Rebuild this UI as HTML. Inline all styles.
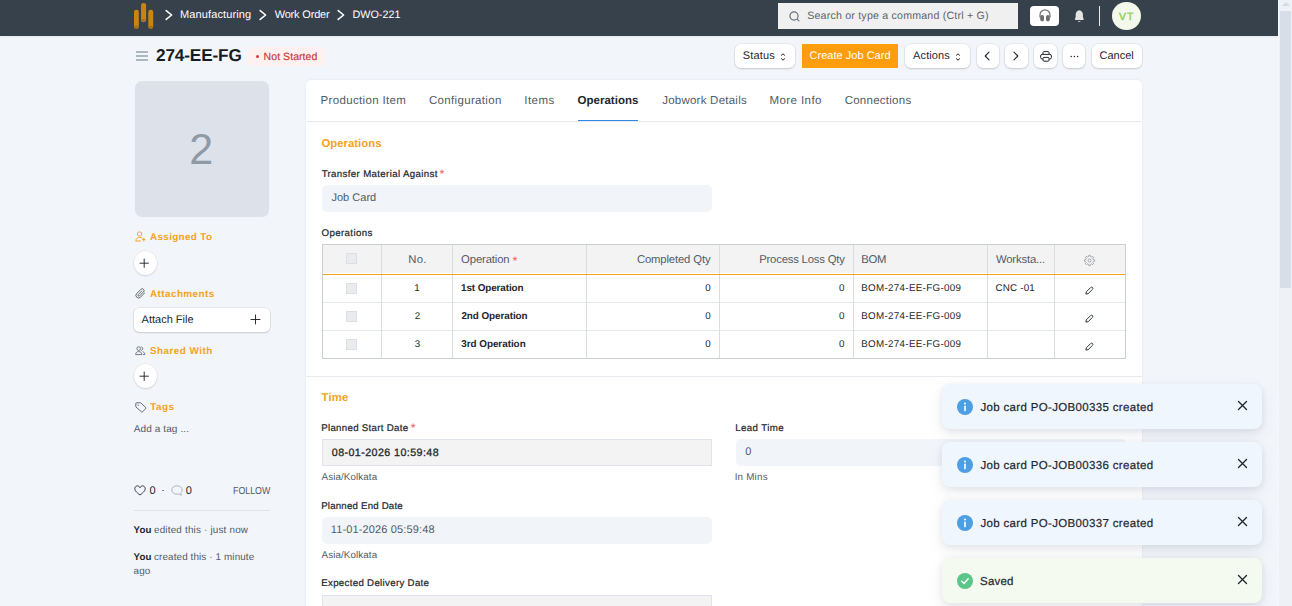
<!DOCTYPE html>
<html lang="en"><head><meta charset="utf-8"><title>274-EE-FG</title><style>
*{box-sizing:border-box;margin:0;padding:0}
html,body{width:1292px;height:606px;overflow:hidden;background:#f2f5fa;font-family:"Liberation Sans",sans-serif;}
#app{position:relative;width:1292px;height:606px;overflow:hidden}
.t{position:absolute;white-space:nowrap;display:block;text-rendering:geometricPrecision}
.abs{position:absolute}
.navbar{position:absolute;left:0;top:0;width:1278px;height:36px;background:#36414c;box-shadow:0 1px 2px rgba(30,40,60,.06)}
.btn{position:absolute;top:44px;height:24px;background:#fff;border-radius:6px;box-shadow:0 0 0 0.5px rgba(0,0,0,.08),0 1px 2px rgba(20,30,50,.16)}
.card{position:absolute;left:306px;top:80px;width:836px;height:540px;background:#fff;border-radius:5px 5px 0 0;box-shadow:0 0 2px rgba(40,60,100,.10)}
.inp{position:absolute;border-radius:5px;background:#f1f4f9}
.inp.ro{background:#f3f3f3;border:1px solid #dfe4ec;border-radius:0}
.cb{position:absolute;width:11px;height:11px;background:#e9ebee;border:1px solid #dcdfe3;border-radius:0}
.vl{position:absolute;width:1px;background:#d9dde1}
.hl{position:absolute;height:1px;background:#e4e7ea}
.circ{position:absolute;width:23.2px;height:24.6px;border-radius:50%;background:#fff;box-shadow:0 0 0 0.5px rgba(0,0,0,.07),0 1px 2px rgba(20,30,50,.12)}
.toast{position:absolute;left:941.8px;width:320.4px;height:45px;border-radius:8px;background:#eff6fd;box-shadow:0 2px 6px rgba(30,40,70,.085),0 6px 18px rgba(30,40,70,.065)}
.toast.ok{background:#f4faef}
svg{position:absolute;overflow:visible}
</style></head><body><div id="app">
<header class="navbar">
<svg style="left:133px;top:2px" width="22" height="28" viewBox="133 2 22 28"><rect x="134" y="9.8" width="4.8" height="19" rx="2.2" fill="#c8860f"/><ellipse cx="136.4" cy="27" rx="2.3" ry="1.6" fill="#ad6f10"/><rect x="141.1" y="3" width="5" height="19.3" rx="2.3" fill="#c8860f"/><ellipse cx="143.6" cy="20.5" rx="2.4" ry="1.6" fill="#ad6f10"/><rect x="148.3" y="9.8" width="4.9" height="19" rx="2.2" fill="#c8860f"/><ellipse cx="150.8" cy="27" rx="2.3" ry="1.6" fill="#ad6f10"/></svg>
<svg style="left:165.0px;top:8.7px" width="8" height="12" viewBox="0 0 8 12"><path d="M1.2 1.6 L6.6 6 L1.2 10.4" fill="none" stroke="#fff" stroke-width="1.6" stroke-linecap="round" stroke-linejoin="round"/></svg>
<span class="t" style="left:180.00px;top:7.30px;height:16px;line-height:16px;font-size:11px;font-weight:400;color:#fff;letter-spacing:0.127px;">Manufacturing</span>
<svg style="left:258.5px;top:8.7px" width="8" height="12" viewBox="0 0 8 12"><path d="M1.2 1.6 L6.6 6 L1.2 10.4" fill="none" stroke="#fff" stroke-width="1.6" stroke-linecap="round" stroke-linejoin="round"/></svg>
<span class="t" style="left:274.64px;top:7.30px;height:16px;line-height:16px;font-size:11px;font-weight:400;color:#fff;letter-spacing:-0.171px;">Work Order</span>
<svg style="left:337.0px;top:8.7px" width="8" height="12" viewBox="0 0 8 12"><path d="M1.2 1.6 L6.6 6 L1.2 10.4" fill="none" stroke="#fff" stroke-width="1.6" stroke-linecap="round" stroke-linejoin="round"/></svg>
<span class="t" style="left:352.50px;top:7.30px;height:16px;line-height:16px;font-size:10.8px;font-weight:400;color:#fff;letter-spacing:-0.017px;">DWO-221</span>
<div class="abs" style="left:778px;top:3px;width:240px;height:26px;background:#f0f0f0"></div>
<svg style="left:789px;top:10.5px" width="11" height="11" viewBox="0 0 11 11"><circle cx="5" cy="5" r="4.1" fill="none" stroke="#68727c" stroke-width="1.2"/><path d="M8.1 8.1 L9.9 9.9" stroke="#68727c" stroke-width="1.2" stroke-linecap="round"/></svg>
<span class="t" style="left:807.15px;top:8.30px;height:16px;line-height:16px;font-size:10.6px;font-weight:400;color:#5a646e;letter-spacing:0.219px;">Search or type a command (Ctrl + G)</span>
<div class="abs" style="left:1030px;top:6px;width:29px;height:20px;background:#fff;border-radius:4px"></div>
<svg style="left:1038.6px;top:9.3px" width="12" height="13" viewBox="0 0 12 13"><path d="M1 8.4 V5.8 A5 5 0 0 1 11 5.8 V8.4" fill="none" stroke="#6e6e6e" stroke-width="1.15"/><rect x="1.2" y="6" width="3.8" height="6.4" rx="1.8" fill="#6e6e6e"/><rect x="7" y="6" width="3.8" height="6.4" rx="1.8" fill="#6e6e6e"/></svg>
<svg style="left:1073.7px;top:9.8px" width="11" height="13" viewBox="0 0 11 13"><path d="M5.3 0.3 C3 0.5 1.7 2.4 1.7 4.6 V6.8 L0.9 9.2 Q0.8 9.9 1.4 9.9 H9.2 Q9.8 9.9 9.7 9.2 L8.9 6.8 V4.6 C8.9 2.4 7.6 0.5 5.3 0.3 Z" fill="#e4e4e4"/><path d="M3.9 10.9 A1.5 1.5 0 0 0 6.7 10.9 Z" fill="#e4e4e4"/></svg>
<div class="abs" style="left:1099px;top:6px;width:1px;height:20px;background:#e9e9e9"></div>
<div class="abs" style="left:1111.8px;top:1.8px;width:29.2px;height:28.6px;border-radius:50%;background:#f2f8ea"></div>
<span class="t" style="left:1119.09px;top:9.10px;height:16px;line-height:16px;font-size:10.5px;font-weight:400;color:#8ccb4e;letter-spacing:0.795px;-webkit-text-stroke:0.3px #8ccb4e;">VT</span>
</header>
<div class="page-head">
<svg style="left:136px;top:50.6px" width="12" height="10" viewBox="0 0 12 10"><path d="M0 1 H12 M0 5 H12 M0 9 H12" stroke="#98a2ab" stroke-width="1.45"/></svg>
<h3 class="t" style="left:156.07px;top:43.00px;height:24px;line-height:24px;font-size:17.2px;font-weight:700;color:#171c22;letter-spacing:-0.153px;">274-EE-FG</h3>
<div class="abs" style="left:248px;top:47px;width:77px;height:19px;border-radius:6px;background:#fff1f0"></div>
<div class="abs" style="left:255.8px;top:55.2px;width:3px;height:3px;border-radius:50%;background:#d33a3a"></div>
<span class="t" style="left:263.60px;top:49.00px;height:16px;line-height:16px;font-size:10.5px;font-weight:400;color:#c9363a;letter-spacing:0.064px;-webkit-text-stroke:0.15px #c9363a;">Not Started</span>
<div class="btn" style="left:735px;width:60px"></div>
<span class="t" style="left:742.76px;top:48.20px;height:16px;line-height:16px;font-size:11px;font-weight:400;color:#1f272e;letter-spacing:0.176px;">Status</span>
<svg style="left:779.6px;top:51.8px" width="6" height="10" viewBox="0 0 6 10"><path d="M1.4 3.3 L3 1.8 L4.6 3.3 M1.4 6.7 L3 8.2 L4.6 6.7" fill="none" stroke="#1f272e" stroke-width="1" stroke-linecap="round" stroke-linejoin="round"/></svg>
<div class="abs" style="left:802px;top:44px;width:96px;height:24px;background:#ff9d0c"></div>
<span class="t" style="left:809.47px;top:48.20px;height:16px;line-height:16px;font-size:11px;font-weight:400;color:#fff;letter-spacing:0.029px;">Create Job Card</span>
<div class="btn" style="left:905px;width:65px"></div>
<span class="t" style="left:913.12px;top:48.20px;height:16px;line-height:16px;font-size:11px;font-weight:400;color:#1f272e;letter-spacing:0.098px;">Actions</span>
<svg style="left:954.9px;top:51.8px" width="6" height="10" viewBox="0 0 6 10"><path d="M1.4 3.3 L3 1.8 L4.6 3.3 M1.4 6.7 L3 8.2 L4.6 6.7" fill="none" stroke="#1f272e" stroke-width="1" stroke-linecap="round" stroke-linejoin="round"/></svg>
<div class="btn" style="left:977px;width:22px"></div>
<svg style="left:983.9px;top:51px" width="6" height="10" viewBox="0 0 6 10"><path d="M5 1.1 L1.2 5 L5 8.9" fill="none" stroke="#1f272e" stroke-width="1.1" stroke-linecap="round" stroke-linejoin="round"/></svg>
<div class="btn" style="left:1005px;width:23px"></div>
<svg style="left:1013.3px;top:51px" width="6" height="10" viewBox="0 0 6 10"><path d="M1 1.1 L4.8 5 L1 8.9" fill="none" stroke="#1f272e" stroke-width="1.1" stroke-linecap="round" stroke-linejoin="round"/></svg>
<div class="btn" style="left:1034px;width:23px"></div>
<svg style="left:1039.5px;top:50.5px" width="12" height="11" viewBox="0 0 12 11"><path d="M3 3.4 V1.6 Q3 0.6 4 0.6 H8 Q9 0.6 9 1.6 V3.4" fill="none" stroke="#1f272e" stroke-width="1"/><rect x="0.6" y="3.4" width="10.8" height="4.6" rx="1.6" fill="none" stroke="#1f272e" stroke-width="1"/><rect x="3" y="6.4" width="6" height="3.8" rx="1" fill="#fff" stroke="#1f272e" stroke-width="1"/></svg>
<div class="btn" style="left:1063px;width:22px"></div>
<svg style="left:1070px;top:55px" width="9" height="3" viewBox="0 0 9 3"><circle cx="1.2" cy="1.5" r=".75" fill="#1f272e"/><circle cx="4.4" cy="1.5" r=".75" fill="#1f272e"/><circle cx="7.6" cy="1.5" r=".75" fill="#1f272e"/></svg>
<div class="btn" style="left:1092px;width:50px"></div>
<span class="t" style="left:1099.47px;top:48.20px;height:16px;line-height:16px;font-size:11px;font-weight:400;color:#1f272e;letter-spacing:-0.002px;">Cancel</span>
</div>
<aside class="sidebar">
<div class="abs" style="left:135px;top:81px;width:134px;height:136px;border-radius:7px;background:#dde1ea"></div>
<span class="t" style="left:189.36px;top:125.40px;height:50px;line-height:50px;font-size:43px;font-weight:400;color:#8f9aa6;letter-spacing:0.000px;">2</span>
<svg style="left:134.5px;top:231px" width="11" height="11" viewBox="0 0 11 11"><circle cx="4.6" cy="3" r="2.2" fill="none" stroke="#f5a21d" stroke-width="0.9"/><path d="M0.8 10 C0.8 7.4 2.4 6.4 4.6 6.4 C5.6 6.4 6.4 6.6 7 7" fill="none" stroke="#f5a21d" stroke-width="0.9" stroke-linecap="round"/><path d="M1 10 H6" stroke="#f5a21d" stroke-width="0.9"/><path d="M8.8 7.2 V10 M7.4 8.6 H10.2" stroke="#f5a21d" stroke-width="0.9" stroke-linecap="round"/></svg>
<span class="t" style="left:150.07px;top:230.00px;height:16px;line-height:16px;font-size:9.9px;font-weight:700;color:#f5a21d;letter-spacing:0.333px;">Assigned To</span>
<div class="circ" style="left:133.6px;top:250.6px"></div>
<svg style="left:140.3px;top:259.2px" width="8.4" height="8.4" viewBox="0 0 8.4 8.4"><path d="M4.2 0 V8.4 M0 4.2 H8.4" transform="translate(0 0)" fill="none" stroke="#1f272e" stroke-width="0.95" stroke-linecap="round"/></svg>
<svg style="left:134.5px;top:288px" width="11" height="11" viewBox="0 0 11 11"><path d="M9.6 5 L5.4 9.2 A2.6 2.6 0 0 1 1.7 5.5 L5.9 1.3 A1.8 1.8 0 0 1 8.5 3.9 L4.5 7.9 A0.9 0.9 0 0 1 3.2 6.6 L6.8 3" fill="none" stroke="#525c66" stroke-width="0.9" stroke-linecap="round"/></svg>
<span class="t" style="left:150.07px;top:286.60px;height:16px;line-height:16px;font-size:9.9px;font-weight:700;color:#f5a21d;letter-spacing:0.427px;">Attachments</span>
<div class="abs" style="left:133.9px;top:307.7px;width:136.3px;height:24.2px;border-radius:5px;background:#fff;box-shadow:0 0 0 0.5px rgba(0,0,0,.10),0 1px 2px rgba(20,30,50,.14)"></div>
<span class="t" style="left:141.62px;top:312.30px;height:16px;line-height:16px;font-size:11px;font-weight:400;color:#1f272e;letter-spacing:0.001px;">Attach File</span>
<svg style="left:251.1px;top:314.9px" width="9.0" height="9.0" viewBox="0 0 9.0 9.0"><path d="M4.5 0 V9.0 M0 4.5 H9.0" transform="translate(0 0)" fill="none" stroke="#1f272e" stroke-width="0.95" stroke-linecap="round"/></svg>
<svg style="left:135px;top:346px" width="10.6" height="9.6" viewBox="0 0 12 11"><circle cx="4.2" cy="3" r="2.1" fill="none" stroke="#525c66" stroke-width="0.9"/><path d="M0.7 9.8 C0.7 7.4 2.2 6.4 4.2 6.4 C6.2 6.4 7.7 7.4 7.7 9.8 Z" fill="none" stroke="#525c66" stroke-width="0.9" stroke-linejoin="round"/><path d="M7.4 1 A2.1 2.1 0 0 1 7.4 5 M9 6.6 C10.4 7 11.2 8 11.2 9.8 H9.4" fill="none" stroke="#525c66" stroke-width="0.9" stroke-linecap="round"/></svg>
<span class="t" style="left:149.94px;top:344.20px;height:16px;line-height:16px;font-size:9.9px;font-weight:700;color:#f5a21d;letter-spacing:0.473px;">Shared With</span>
<div class="circ" style="left:133.6px;top:363.6px"></div>
<svg style="left:140.3px;top:372.2px" width="8.4" height="8.4" viewBox="0 0 8.4 8.4"><path d="M4.2 0 V8.4 M0 4.2 H8.4" transform="translate(0 0)" fill="none" stroke="#1f272e" stroke-width="0.95" stroke-linecap="round"/></svg>
<svg style="left:134.5px;top:401.5px" width="12" height="11" viewBox="0 0 12 11"><path d="M0.8 1.4 Q0.8 0.8 1.4 0.8 H5.6 L10.8 5.6 Q11.2 6 10.8 6.5 L7.4 9.9 Q7 10.3 6.5 9.9 L0.8 4.8 Z" fill="none" stroke="#525c66" stroke-width="0.9" stroke-linejoin="round"/><circle cx="3.2" cy="3.1" r="0.7" fill="#525c66"/></svg>
<span class="t" style="left:150.16px;top:399.60px;height:16px;line-height:16px;font-size:9.9px;font-weight:700;color:#f5a21d;letter-spacing:0.537px;">Tags</span>
<span class="t" style="left:133.81px;top:421.60px;height:16px;line-height:16px;font-size:10px;font-weight:400;color:#525c66;letter-spacing:0.102px;">Add a tag ...</span>
<svg style="left:134px;top:485px" width="12" height="11" viewBox="0 0 12 11"><path d="M6 10 C2 7 0.8 5.4 0.8 3.6 C0.8 2 2 0.9 3.4 0.9 C4.6 0.9 5.5 1.6 6 2.6 C6.5 1.6 7.4 0.9 8.6 0.9 C10 0.9 11.2 2 11.2 3.6 C11.2 5.4 10 7 6 10 Z" fill="none" stroke="#1f272e" stroke-width="0.9" stroke-linejoin="round"/></svg>
<span class="t" style="left:149.53px;top:483.30px;height:16px;line-height:16px;font-size:11px;font-weight:400;color:#1f272e;letter-spacing:0.000px;">0</span>
<div class="abs" style="left:162.3px;top:489.6px;width:1.6px;height:1.6px;border-radius:50%;background:#6c7680"></div>
<svg style="left:171px;top:485px;transform:scaleX(-1)" width="12" height="11" viewBox="0 0 12 11"><path d="M6 0.8 C9 0.8 11.2 2.6 11.2 5 C11.2 7.4 9 9.2 6 9.2 C5.4 9.2 4.8 9.1 4.3 9 L1.6 10.2 L2.3 8 C1.3 7.2 0.8 6.2 0.8 5 C0.8 2.6 3 0.8 6 0.8 Z" fill="none" stroke="#a5aeb7" stroke-width="0.9" stroke-linejoin="round"/></svg>
<span class="t" style="left:185.83px;top:483.30px;height:16px;line-height:16px;font-size:11px;font-weight:400;color:#1f272e;letter-spacing:0.000px;">0</span>
<span class="t" style="left:232.56px;top:483.60px;height:16px;line-height:16px;font-size:10.2px;font-weight:400;color:#525c66;letter-spacing:0.000px;transform:scaleX(0.8648);transform-origin:0 50%;">FOLLOW</span>
<div class="hl" style="left:134px;top:510px;width:136px;background:#dfe3e8"></div>
<span class="t" style="left:133.51px;top:523.30px;height:16px;line-height:16px;font-size:9.7px;font-weight:700;color:#1f272e;letter-spacing:0.135px;">You</span>
<span class="t" style="left:154.03px;top:523.30px;height:16px;line-height:16px;font-size:9.9px;font-weight:400;color:#525c66;letter-spacing:0.187px;">edited this · just now</span>
<span class="t" style="left:133.51px;top:550.30px;height:16px;line-height:16px;font-size:9.7px;font-weight:700;color:#1f272e;letter-spacing:0.135px;">You</span>
<span class="t" style="left:154.03px;top:550.30px;height:16px;line-height:16px;font-size:9.9px;font-weight:400;color:#525c66;letter-spacing:0.113px;">created this · 1 minute</span>
<span class="t" style="left:133.60px;top:564.30px;height:16px;line-height:16px;font-size:9.9px;font-weight:400;color:#525c66;letter-spacing:0.147px;">ago</span>
</aside>
<main class="card"></main>
<div class="layer">
<span class="t" style="left:320.50px;top:93.20px;height:16px;line-height:16px;font-size:11.5px;font-weight:400;color:#525c66;letter-spacing:0.349px;">Production Item</span>
<span class="t" style="left:428.97px;top:93.20px;height:16px;line-height:16px;font-size:11.5px;font-weight:400;color:#525c66;letter-spacing:0.327px;">Configuration</span>
<span class="t" style="left:524.36px;top:93.20px;height:16px;line-height:16px;font-size:11.5px;font-weight:400;color:#525c66;letter-spacing:0.425px;">Items</span>
<span class="t" style="left:577.60px;top:93.20px;height:16px;line-height:16px;font-size:11.5px;font-weight:700;color:#1f272e;letter-spacing:0.004px;">Operations</span>
<span class="t" style="left:662.15px;top:93.20px;height:16px;line-height:16px;font-size:11.5px;font-weight:400;color:#525c66;letter-spacing:0.243px;">Jobwork Details</span>
<span class="t" style="left:769.50px;top:93.20px;height:16px;line-height:16px;font-size:11.5px;font-weight:400;color:#525c66;letter-spacing:0.417px;">More Info</span>
<span class="t" style="left:844.67px;top:93.20px;height:16px;line-height:16px;font-size:11.5px;font-weight:400;color:#525c66;letter-spacing:0.258px;">Connections</span>
<div class="hl" style="left:306px;top:121px;width:836px;background:#e8ecf1"></div>
<div class="abs" style="left:578px;top:120px;width:60px;height:1px;background:#2e8ae6"></div>
<span class="t" style="left:321.40px;top:136.20px;height:16px;line-height:16px;font-size:11.3px;font-weight:700;color:#f5a21d;letter-spacing:0.047px;">Operations</span>
<span class="t" style="left:321.64px;top:166.60px;height:16px;line-height:16px;font-size:9.7px;font-weight:400;color:#1f272e;letter-spacing:0.349px;-webkit-text-stroke:0.22px #1f272e;">Transfer Material Against</span>
<span class="t" style="left:439.48px;top:166.40px;height:16px;line-height:16px;font-size:12.5px;font-weight:400;color:#ee5a5f;letter-spacing:0.000px;">*</span>
<div class="inp" style="left:322px;top:185px;width:390px;height:27px"></div>
<span class="t" style="left:331.48px;top:190.40px;height:16px;line-height:16px;font-size:11px;font-weight:400;color:#525c66;letter-spacing:0.014px;">Job Card</span>
<span class="t" style="left:321.54px;top:226.00px;height:16px;line-height:16px;font-size:9.7px;font-weight:400;color:#1f272e;letter-spacing:0.379px;-webkit-text-stroke:0.22px #1f272e;">Operations</span>
<div class="abs" style="left:322px;top:244px;width:804px;height:115px;background:#fff;border:1px solid #c9ced3"></div>
<div class="abs" style="left:323px;top:245px;width:802px;height:28px;background:#f3f3f3"></div>
<div class="hl" style="left:323px;top:302px;width:802px"></div>
<div class="hl" style="left:323px;top:330px;width:802px"></div>
<div class="vl" style="left:381px;top:245px;height:113px"></div>
<div class="vl" style="left:452px;top:245px;height:113px"></div>
<div class="vl" style="left:586px;top:245px;height:113px"></div>
<div class="vl" style="left:719px;top:245px;height:113px"></div>
<div class="vl" style="left:853px;top:245px;height:113px"></div>
<div class="vl" style="left:987px;top:245px;height:113px"></div>
<div class="vl" style="left:1054px;top:245px;height:113px"></div>
<div class="abs" style="left:323px;top:274px;width:802px;height:1px;background:#f5a21d"></div>
<div class="cb" style="left:346px;top:253.3px"></div>
<div class="cb" style="left:346px;top:282.7px"></div>
<div class="cb" style="left:346px;top:310.7px"></div>
<div class="cb" style="left:346px;top:338.7px"></div>
<span class="t" style="left:408.30px;top:252.30px;height:16px;line-height:16px;font-size:11.3px;font-weight:400;color:#525c66;letter-spacing:0.270px;">No.</span>
<span class="t" style="left:461.10px;top:252.30px;height:16px;line-height:16px;font-size:11.3px;font-weight:400;color:#525c66;letter-spacing:-0.136px;">Operation</span>
<span class="t" style="left:512.48px;top:253.20px;height:16px;line-height:16px;font-size:12.5px;font-weight:400;color:#ee5a5f;letter-spacing:0.000px;">*</span>
<span class="t" style="left:636.94px;top:252.30px;height:16px;line-height:16px;font-size:11.3px;font-weight:400;color:#525c66;letter-spacing:-0.146px;">Completed Qty</span>
<span class="t" style="left:759.20px;top:252.30px;height:16px;line-height:16px;font-size:11.3px;font-weight:400;color:#525c66;letter-spacing:-0.191px;">Process Loss Qty</span>
<span class="t" style="left:861.20px;top:252.30px;height:16px;line-height:16px;font-size:11.3px;font-weight:400;color:#525c66;letter-spacing:-0.282px;">BOM</span>
<span class="t" style="left:995.88px;top:252.30px;height:16px;line-height:16px;font-size:11.3px;font-weight:400;color:#525c66;letter-spacing:-0.151px;">Worksta...</span>
<svg style="left:1084px;top:254.9px" width="11" height="11" viewBox="0 0 11 11"><path d="M4.63 1.60 L4.85 0.34 L6.15 0.34 L6.37 1.60 L7.64 2.12 L8.69 1.39 L9.61 2.31 L8.88 3.36 L9.40 4.63 L10.66 4.85 L10.66 6.15 L9.40 6.37 L8.88 7.64 L9.61 8.69 L8.69 9.61 L7.64 8.88 L6.37 9.40 L6.15 10.66 L4.85 10.66 L4.63 9.40 L3.36 8.88 L2.31 9.61 L1.39 8.69 L2.12 7.64 L1.60 6.37 L0.34 6.15 L0.34 4.85 L1.60 4.63 L2.12 3.36 L1.39 2.31 L2.31 1.39 L3.36 2.12 Z" fill="none" stroke="#8a929a" stroke-width="0.75" stroke-linejoin="round"/><circle cx="5.5" cy="5.5" r="1.5" fill="none" stroke="#8a929a" stroke-width="0.75"/></svg>
<span class="t" style="left:414.24px;top:280.70px;height:16px;line-height:16px;font-size:9.8px;font-weight:400;color:#1f272e;letter-spacing:0.000px;">1</span>
<span class="t" style="left:461.04px;top:280.80px;height:16px;line-height:16px;font-size:9.9px;font-weight:700;color:#1f272e;letter-spacing:-0.092px;">1st Operation</span>
<span class="t" style="left:705.26px;top:280.80px;height:16px;line-height:16px;font-size:9.8px;font-weight:400;color:#1f272e;letter-spacing:0.000px;">0</span>
<span class="t" style="left:839.06px;top:280.80px;height:16px;line-height:16px;font-size:9.8px;font-weight:400;color:#1f272e;letter-spacing:0.000px;">0</span>
<span class="t" style="left:861.20px;top:280.80px;height:16px;line-height:16px;font-size:9.8px;font-weight:400;color:#1f272e;letter-spacing:0.317px;">BOM-274-EE-FG-009</span>
<span class="t" style="left:995.43px;top:280.80px;height:16px;line-height:16px;font-size:9.8px;font-weight:400;color:#1f272e;letter-spacing:0.205px;">CNC -01</span>
<svg style="left:1085.2px;top:285.5px" width="9" height="9" viewBox="0 0 9 9"><path d="M0.9 8.1 L1.3 5.9 L5.7 1.5 Q6.6 0.7 7.5 1.5 Q8.3 2.4 7.5 3.3 L3.1 7.7 Z" fill="none" stroke="#2b343c" stroke-width="1" stroke-linejoin="round"/></svg>
<span class="t" style="left:414.81px;top:308.70px;height:16px;line-height:16px;font-size:9.8px;font-weight:400;color:#1f272e;letter-spacing:0.000px;">2</span>
<span class="t" style="left:461.38px;top:308.80px;height:16px;line-height:16px;font-size:9.9px;font-weight:700;color:#1f272e;letter-spacing:-0.061px;">2nd Operation</span>
<span class="t" style="left:705.26px;top:308.80px;height:16px;line-height:16px;font-size:9.8px;font-weight:400;color:#1f272e;letter-spacing:0.000px;">0</span>
<span class="t" style="left:839.06px;top:308.80px;height:16px;line-height:16px;font-size:9.8px;font-weight:400;color:#1f272e;letter-spacing:0.000px;">0</span>
<span class="t" style="left:861.20px;top:308.80px;height:16px;line-height:16px;font-size:9.8px;font-weight:400;color:#1f272e;letter-spacing:0.317px;">BOM-274-EE-FG-009</span>
<svg style="left:1085.2px;top:313.5px" width="9" height="9" viewBox="0 0 9 9"><path d="M0.9 8.1 L1.3 5.9 L5.7 1.5 Q6.6 0.7 7.5 1.5 Q8.3 2.4 7.5 3.3 L3.1 7.7 Z" fill="none" stroke="#2b343c" stroke-width="1" stroke-linejoin="round"/></svg>
<span class="t" style="left:414.73px;top:336.60px;height:16px;line-height:16px;font-size:9.8px;font-weight:400;color:#1f272e;letter-spacing:0.000px;">3</span>
<span class="t" style="left:461.25px;top:336.70px;height:16px;line-height:16px;font-size:9.9px;font-weight:700;color:#1f272e;letter-spacing:-0.028px;">3rd Operation</span>
<span class="t" style="left:705.26px;top:336.70px;height:16px;line-height:16px;font-size:9.8px;font-weight:400;color:#1f272e;letter-spacing:0.000px;">0</span>
<span class="t" style="left:839.06px;top:336.70px;height:16px;line-height:16px;font-size:9.8px;font-weight:400;color:#1f272e;letter-spacing:0.000px;">0</span>
<span class="t" style="left:861.20px;top:336.70px;height:16px;line-height:16px;font-size:9.8px;font-weight:400;color:#1f272e;letter-spacing:0.317px;">BOM-274-EE-FG-009</span>
<svg style="left:1085.2px;top:341.5px" width="9" height="9" viewBox="0 0 9 9"><path d="M0.9 8.1 L1.3 5.9 L5.7 1.5 Q6.6 0.7 7.5 1.5 Q8.3 2.4 7.5 3.3 L3.1 7.7 Z" fill="none" stroke="#2b343c" stroke-width="1" stroke-linejoin="round"/></svg>
<div class="hl" style="left:306px;top:376px;width:836px;background:#e8ecf1"></div>
<span class="t" style="left:321.54px;top:390.00px;height:16px;line-height:16px;font-size:11.3px;font-weight:700;color:#f5a21d;letter-spacing:0.197px;">Time</span>
<span class="t" style="left:321.22px;top:420.60px;height:16px;line-height:16px;font-size:9.7px;font-weight:400;color:#1f272e;letter-spacing:0.297px;-webkit-text-stroke:0.22px #1f272e;">Planned Start Date</span>
<span class="t" style="left:410.68px;top:420.40px;height:16px;line-height:16px;font-size:12.5px;font-weight:400;color:#ee5a5f;letter-spacing:0.000px;">*</span>
<div class="inp ro" style="left:322px;top:439px;width:390px;height:27px"></div>
<span class="t" style="left:331.81px;top:445.00px;height:16px;line-height:16px;font-size:10.7px;font-weight:400;color:#1f272e;letter-spacing:0.419px;-webkit-text-stroke:0.3px #1f272e;">08-01-2026 10:59:48</span>
<span class="t" style="left:321.59px;top:469.70px;height:16px;line-height:16px;font-size:9.8px;font-weight:400;color:#525c66;letter-spacing:0.099px;">Asia/Kolkata</span>
<span class="t" style="left:321.22px;top:498.70px;height:16px;line-height:16px;font-size:9.7px;font-weight:400;color:#1f272e;letter-spacing:0.189px;-webkit-text-stroke:0.22px #1f272e;">Planned End Date</span>
<div class="inp" style="left:322px;top:517px;width:390px;height:27px"></div>
<span class="t" style="left:330.72px;top:522.40px;height:16px;line-height:16px;font-size:11px;font-weight:400;color:#525c66;letter-spacing:0.138px;">11-01-2026 05:59:48</span>
<span class="t" style="left:321.59px;top:547.80px;height:16px;line-height:16px;font-size:9.8px;font-weight:400;color:#525c66;letter-spacing:0.099px;">Asia/Kolkata</span>
<span class="t" style="left:321.22px;top:575.80px;height:16px;line-height:16px;font-size:9.7px;font-weight:400;color:#1f272e;letter-spacing:0.311px;-webkit-text-stroke:0.22px #1f272e;">Expected Delivery Date</span>
<div class="inp ro" style="left:322px;top:595px;width:390px;height:27px"></div>
<span class="t" style="left:735.22px;top:420.80px;height:16px;line-height:16px;font-size:9.7px;font-weight:400;color:#1f272e;letter-spacing:0.388px;-webkit-text-stroke:0.22px #1f272e;">Lead Time</span>
<div class="inp" style="left:736px;top:439px;width:390px;height:27px"></div>
<span class="t" style="left:745.23px;top:443.90px;height:16px;line-height:16px;font-size:11px;font-weight:400;color:#525c66;letter-spacing:0.000px;">0</span>
<span class="t" style="left:734.67px;top:470.00px;height:16px;line-height:16px;font-size:9.8px;font-weight:400;color:#525c66;letter-spacing:0.217px;">In Mins</span>
</div>
<div class="toasts">
<div class="toast" style="top:384px"></div>
<svg style="left:957.0px;top:399.1px" width="16" height="16" viewBox="0 0 16 16"><circle cx="8" cy="8" r="8" fill="#4c9fe3"/><circle cx="8" cy="4.6" r="1" fill="#fff"/><path d="M8 7.2 V11.6" stroke="#fff" stroke-width="1.6" stroke-linecap="round"/></svg>
<span class="t" style="left:980.42px;top:400.20px;height:16px;line-height:16px;font-size:11.5px;font-weight:400;color:#1f272e;letter-spacing:0.336px;-webkit-text-stroke:0.2px #1f272e;">Job card PO-JOB00335 created</span>
<svg style="left:1237.8px;top:400.8px" width="9.0" height="9.0"><path d="M0.5 0.5 L8.5 8.5 M8.5 0.5 L0.5 8.5" fill="none" stroke="#1f272e" stroke-width="1.3" stroke-linecap="round"/></svg>
<div class="toast" style="top:442px"></div>
<svg style="left:957.0px;top:457.1px" width="16" height="16" viewBox="0 0 16 16"><circle cx="8" cy="8" r="8" fill="#4c9fe3"/><circle cx="8" cy="4.6" r="1" fill="#fff"/><path d="M8 7.2 V11.6" stroke="#fff" stroke-width="1.6" stroke-linecap="round"/></svg>
<span class="t" style="left:980.42px;top:458.20px;height:16px;line-height:16px;font-size:11.5px;font-weight:400;color:#1f272e;letter-spacing:0.336px;-webkit-text-stroke:0.2px #1f272e;">Job card PO-JOB00336 created</span>
<svg style="left:1237.8px;top:458.8px" width="9.0" height="9.0"><path d="M0.5 0.5 L8.5 8.5 M8.5 0.5 L0.5 8.5" fill="none" stroke="#1f272e" stroke-width="1.3" stroke-linecap="round"/></svg>
<div class="toast" style="top:500px"></div>
<svg style="left:957.0px;top:515.1px" width="16" height="16" viewBox="0 0 16 16"><circle cx="8" cy="8" r="8" fill="#4c9fe3"/><circle cx="8" cy="4.6" r="1" fill="#fff"/><path d="M8 7.2 V11.6" stroke="#fff" stroke-width="1.6" stroke-linecap="round"/></svg>
<span class="t" style="left:980.42px;top:516.20px;height:16px;line-height:16px;font-size:11.5px;font-weight:400;color:#1f272e;letter-spacing:0.336px;-webkit-text-stroke:0.2px #1f272e;">Job card PO-JOB00337 created</span>
<svg style="left:1237.8px;top:516.8px" width="9.0" height="9.0"><path d="M0.5 0.5 L8.5 8.5 M8.5 0.5 L0.5 8.5" fill="none" stroke="#1f272e" stroke-width="1.3" stroke-linecap="round"/></svg>
<div class="toast ok" style="top:558px"></div>
<svg style="left:957.0px;top:573.1px" width="16" height="16" viewBox="0 0 16 16"><circle cx="8" cy="8" r="8" fill="#5cc58a"/><path d="M4.8 8.2 L7 10.4 L11.2 5.8" fill="none" stroke="#fff" stroke-width="1.5" stroke-linecap="round" stroke-linejoin="round"/></svg>
<span class="t" style="left:980.12px;top:574.20px;height:16px;line-height:16px;font-size:11.5px;font-weight:400;color:#1f272e;letter-spacing:0.188px;-webkit-text-stroke:0.2px #1f272e;">Saved</span>
<svg style="left:1237.8px;top:574.8px" width="9.0" height="9.0"><path d="M0.5 0.5 L8.5 8.5 M8.5 0.5 L0.5 8.5" fill="none" stroke="#1f272e" stroke-width="1.3" stroke-linecap="round"/></svg>
</div>
<div class="abs" style="left:1278px;top:0;width:14px;height:606px;background:#eef1f6;border-left:1px solid #f5f7fa"></div>
<svg style="left:1281.7px;top:2px" width="8" height="4" viewBox="0 0 8 4"><path d="M0 4 L4 0 L8 4 Z" fill="#d5dbe4"/></svg>
<div class="abs" style="left:1280px;top:11px;width:11px;height:277px;background:#d8dee7"></div>
</div></body></html>
